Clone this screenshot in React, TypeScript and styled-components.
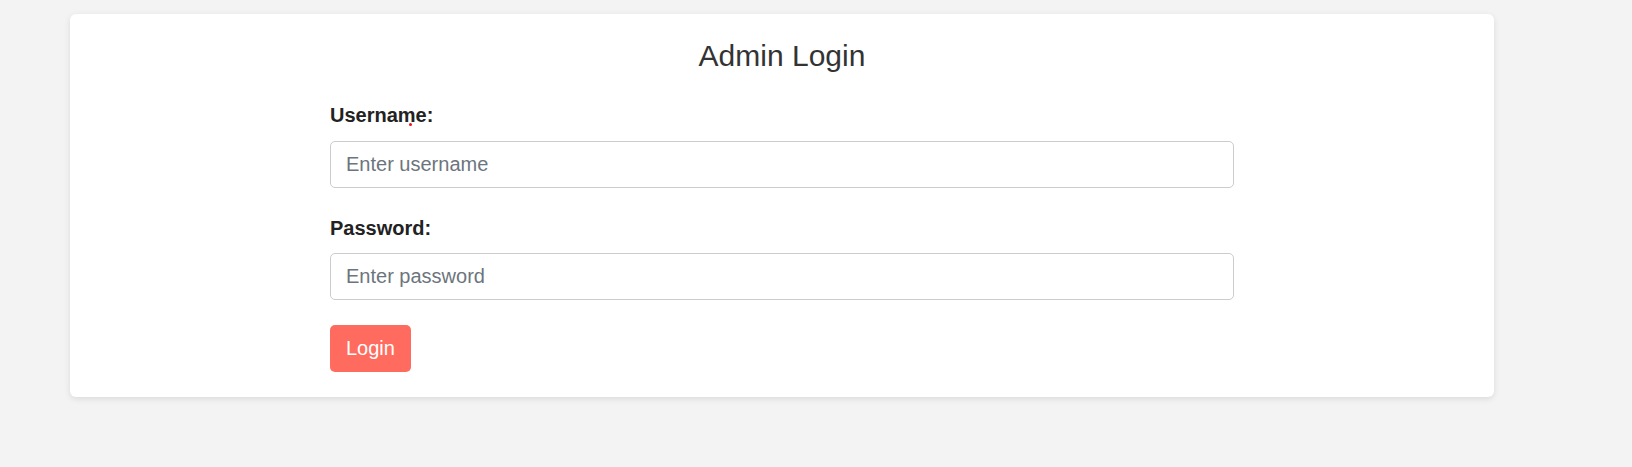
import React from "react";
import styled, { createGlobalStyle } from "styled-components";

const GlobalStyle = createGlobalStyle`
  html, body {
    margin: 0;
    padding: 0;
    background: #f3f3f3;
    font-family: "Liberation Sans", Arial, Helvetica, sans-serif;
  }
  * { box-sizing: border-box; }
`;

const Page = styled.div`
  padding: 14px 0 0 70px;
  min-height: 467px;
`;

const Card = styled.div`
  width: 1424px;
  background: #ffffff;
  border-radius: 6px;
  box-shadow: 0 2px 6px rgba(0, 0, 0, 0.1);
  padding: 25px;
`;

const Title = styled.h2`
  margin: 0 0 31px;
  font-size: 30px;
  line-height: 34px;
  font-weight: 400;
  text-align: center;
  color: #333333;
`;

const Form = styled.form`
  width: 904px;
  margin: 0 auto;
  display: flex;
  flex-direction: column;
  align-items: flex-start;
`;

const Group = styled.div<{ $last?: boolean }>`
  width: 100%;
  margin-bottom: ${(p) => (p.$last ? "25px" : "29px")};
`;

const Label = styled.label`
  position: relative;
  display: block;
  width: max-content;
  font-size: 20px;
  line-height: 23px;
  font-weight: 700;
  color: #222222;
  margin-bottom: 13.5px;
`;

const Mark = styled.span`
  position: absolute;
  left: 79px;
  top: 19px;
  width: 3px;
  height: 3px;
  border-radius: 50%;
  background: #e8121b;
`;

const Input = styled.input`
  display: block;
  width: 100%;
  height: 47px;
  padding: 0 15px;
  border: 1px solid #cccccc;
  border-radius: 5px;
  font-family: "Liberation Sans", Arial, Helvetica, sans-serif;
  font-size: 20px;
  color: #333333;
  background: #ffffff;
  outline: none;
  &::placeholder {
    color: #6c757d;
  }
`;

const Button = styled.button`
  height: 47px;
  padding: 0 16px;
  border: none;
  border-radius: 5px;
  background: #ff6b5e;
  color: #ffffff;
  font-family: "Liberation Sans", Arial, Helvetica, sans-serif;
  font-size: 20px;
  cursor: pointer;
`;

export default function App() {
  return (
    <>
      <GlobalStyle />
      <Page>
        <Card>
          <Title>Admin Login</Title>
          <Form onSubmit={(e) => e.preventDefault()}>
            <Group>
              <Label htmlFor="username">
                Username:
                <Mark />
              </Label>
              <Input id="username" type="text" placeholder="Enter username" />
            </Group>
            <Group $last>
              <Label htmlFor="password">Password:</Label>
              <Input id="password" type="password" placeholder="Enter password" />
            </Group>
            <Button type="submit">Login</Button>
          </Form>
        </Card>
      </Page>
    </>
  );
}
